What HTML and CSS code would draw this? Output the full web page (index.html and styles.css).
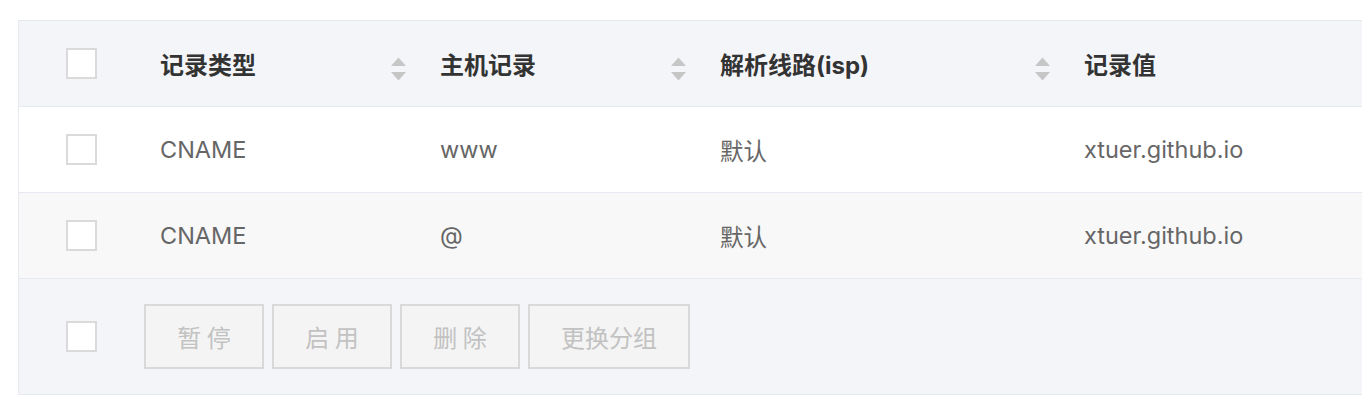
FILE: index.html
```html
<!DOCTYPE html>
<html lang="zh-CN">
<head>
<meta charset="utf-8">
<title>解析记录</title>
<link rel="stylesheet" href="styles.css">
</head>
<body>
<div class="table">
  <div class="row head">
    <div class="cell check"><span class="box"></span></div>
    <div class="cell sortable"><span>记录类型</span><svg class="sort" width="15" height="24" viewBox="0 0 15 24"><polygon points="7.5,0.5 15,9 0,9"/><polygon points="0,15 15,15 7.5,23.5"/></svg></div>
    <div class="cell sortable"><span>主机记录</span><svg class="sort" width="15" height="24" viewBox="0 0 15 24"><polygon points="7.5,0.5 15,9 0,9"/><polygon points="0,15 15,15 7.5,23.5"/></svg></div>
    <div class="cell sortable"><span>解析线路(isp)</span><svg class="sort" width="15" height="24" viewBox="0 0 15 24"><polygon points="7.5,0.5 15,9 0,9"/><polygon points="0,15 15,15 7.5,23.5"/></svg></div>
    <div class="cell"><span>记录值</span></div>
  </div>
  <div class="row body">
    <div class="cell check"><span class="box"></span></div>
    <div class="cell">CNAME</div>
    <div class="cell">www</div>
    <div class="cell">默认</div>
    <div class="cell">xtuer.github.io</div>
  </div>
  <div class="row body alt">
    <div class="cell check"><span class="box"></span></div>
    <div class="cell">CNAME</div>
    <div class="cell">@</div>
    <div class="cell">默认</div>
    <div class="cell">xtuer.github.io</div>
  </div>
  <div class="foot">
    <span class="box"></span>
    <div class="actions">
      <button class="btn">暂 停</button>
      <button class="btn">启 用</button>
      <button class="btn">删 除</button>
      <button class="btn">更换分组</button>
    </div>
  </div>
</div>
</body>
</html>
```
FILE: styles.css
```css
* { box-sizing: border-box; }
html, body { margin: 0; padding: 0; background: #fff; }
body {
  font-family: Inter, "Noto Sans CJK SC", sans-serif;
  overflow: hidden;
}
.table {
  margin: 20px 0 0 18px;
  border-top: 1px solid #e6e9ef;
  border-left: 1px solid #e6e9ef;
  border-bottom: 1px solid #e6e9ef;
}
.row {
  display: grid;
  grid-template-columns: 117px 280px 280px 364px 1fr;
  height: 86px;
  border-bottom: 1px solid #e6e9ef;
}
.head { background: #f4f5f9; }
.body { background: #fff; }
.body.alt { background: #f8f8f8; }
.cell {
  display: flex;
  align-items: center;
  padding: 0 24px;
  font-size: 23.5px;
  color: #666;
  white-space: nowrap;
}
.head .cell { color: #333; font-weight: bold; font-size: 24px; }
.cell.check { padding: 0 0 0 47px; }
.cell.sortable { justify-content: space-between; padding-right: 10px; }
.sort { fill: #c6c6c6; margin-top: 10px; flex: none; }
.box {
  display: block;
  width: 31px;
  height: 31px;
  border: 2px solid #dadada;
  background: #fff;
  flex: none;
}
.foot {
  display: flex;
  align-items: center;
  height: 115px;
  padding-left: 47px;
  background: #f4f5f9;
}
.actions {
  display: flex;
  gap: 8px;
  margin-left: 47px;
}
.btn {
  height: 65px;
  min-width: 120px;
  padding: 0 31px;
  border: 2px solid #d9d9d9;
  background: #f4f4f4;
  color: #c2c2c2;
  font-family: "Noto Sans CJK SC", sans-serif;
  font-size: 24px;
  white-space: nowrap;
}
```
